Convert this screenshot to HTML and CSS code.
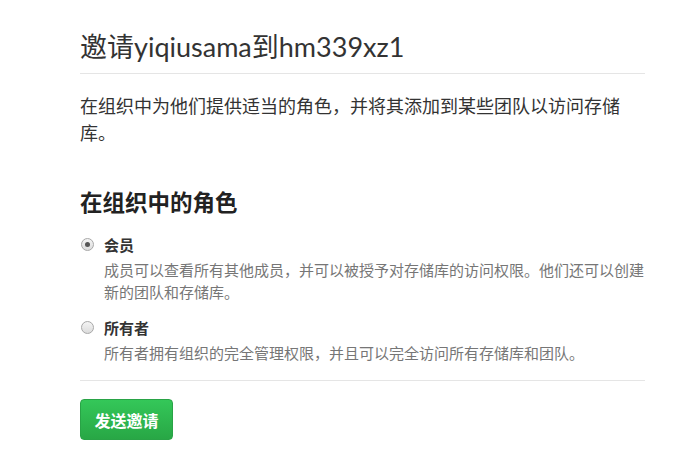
FILE: index.html
```html
<!DOCTYPE html>
<html lang="zh-CN">
<head>
<meta charset="utf-8">
<link rel="stylesheet" href="styles.css">
</head>
<body>
<main class="page">
  <h1 class="title">邀请yiqiusama到hm339xz1</h1>
  <p class="lead">在组织中为他们提供适当的角色，并将其添加到某些团队以访问存储库。</p>
  <h2 class="section">在组织中的角色</h2>
  <div class="option">
    <span class="radio checked"></span>
    <div class="option-body">
      <div class="option-label">会员</div>
      <div class="option-desc">成员可以查看所有其他成员，并可以被授予对存储库的访问权限。他们还可以创建新的团队和存储库。</div>
    </div>
  </div>
  <div class="option second">
    <span class="radio"></span>
    <div class="option-body">
      <div class="option-label">所有者</div>
      <div class="option-desc">所有者拥有组织的完全管理权限，并且可以完全访问所有存储库和团队。</div>
    </div>
  </div>
  <hr class="divider">
  <button class="btn-primary" type="button">发送邀请</button>
</main>
</body>
</html>
```
FILE: styles.css
```css
html, body {
  margin: 0;
  padding: 0;
  background: #fff;
}
body {
  font-family: "Noto Sans CJK SC", "Noto Sans", sans-serif;
  color: #333;
}
.page {
  width: 565px;
  margin-left: 80px;
  padding-top: 29px;
}
.title {
  margin: 0;
  font-family: "Lato", "Noto Sans CJK SC", sans-serif;
  font-size: 27px;
  line-height: 36px;
  font-weight: 400;
  color: #333;
  padding-bottom: 8px;
  border-bottom: 1px solid #e5e5e5;
}
.lead {
  margin: 18px 0 0;
  font-size: 18px;
  line-height: 27px;
  color: #333;
}
.section {
  margin: 40px 0 0;
  font-size: 22.5px;
  line-height: 30px;
  font-weight: 700;
  color: #222;
}
.option {
  display: flex;
  align-items: flex-start;
  gap: 10px;
  margin-top: 17px;
}
.option.second {
  margin-top: 13px;
}
.radio {
  flex: 0 0 auto;
  box-sizing: border-box;
  width: 13px;
  height: 13px;
  margin: 5px 0 0 1px;
  border-radius: 50%;
  border: 1px solid #a8a8a8;
  background: linear-gradient(#f4f4f4, #dcdcdc);
  position: relative;
}
.radio.checked::after {
  content: "";
  position: absolute;
  left: 3px;
  top: 3px;
  width: 5px;
  height: 5px;
  border-radius: 50%;
  background: #555;
}
.option-label {
  font-size: 15px;
  line-height: 24px;
  font-weight: 700;
  color: #333;
}
.option-desc {
  margin-top: 2px;
  font-size: 15px;
  line-height: 22px;
  color: #767676;
}
.divider {
  margin: 16px 0 0;
  border: 0;
  border-top: 1px solid #e5e5e5;
  height: 0;
}
.btn-primary {
  margin-top: 18px;
  width: 93px;
  height: 41px;
  padding: 0;
  border: 1px solid #29a346;
  border-radius: 4px;
  background: linear-gradient(#34c759, #28a745);
  color: #fff;
  font-family: "Noto Sans CJK SC", sans-serif;
  font-size: 16px;
  font-weight: 700;
  cursor: pointer;
}
```
